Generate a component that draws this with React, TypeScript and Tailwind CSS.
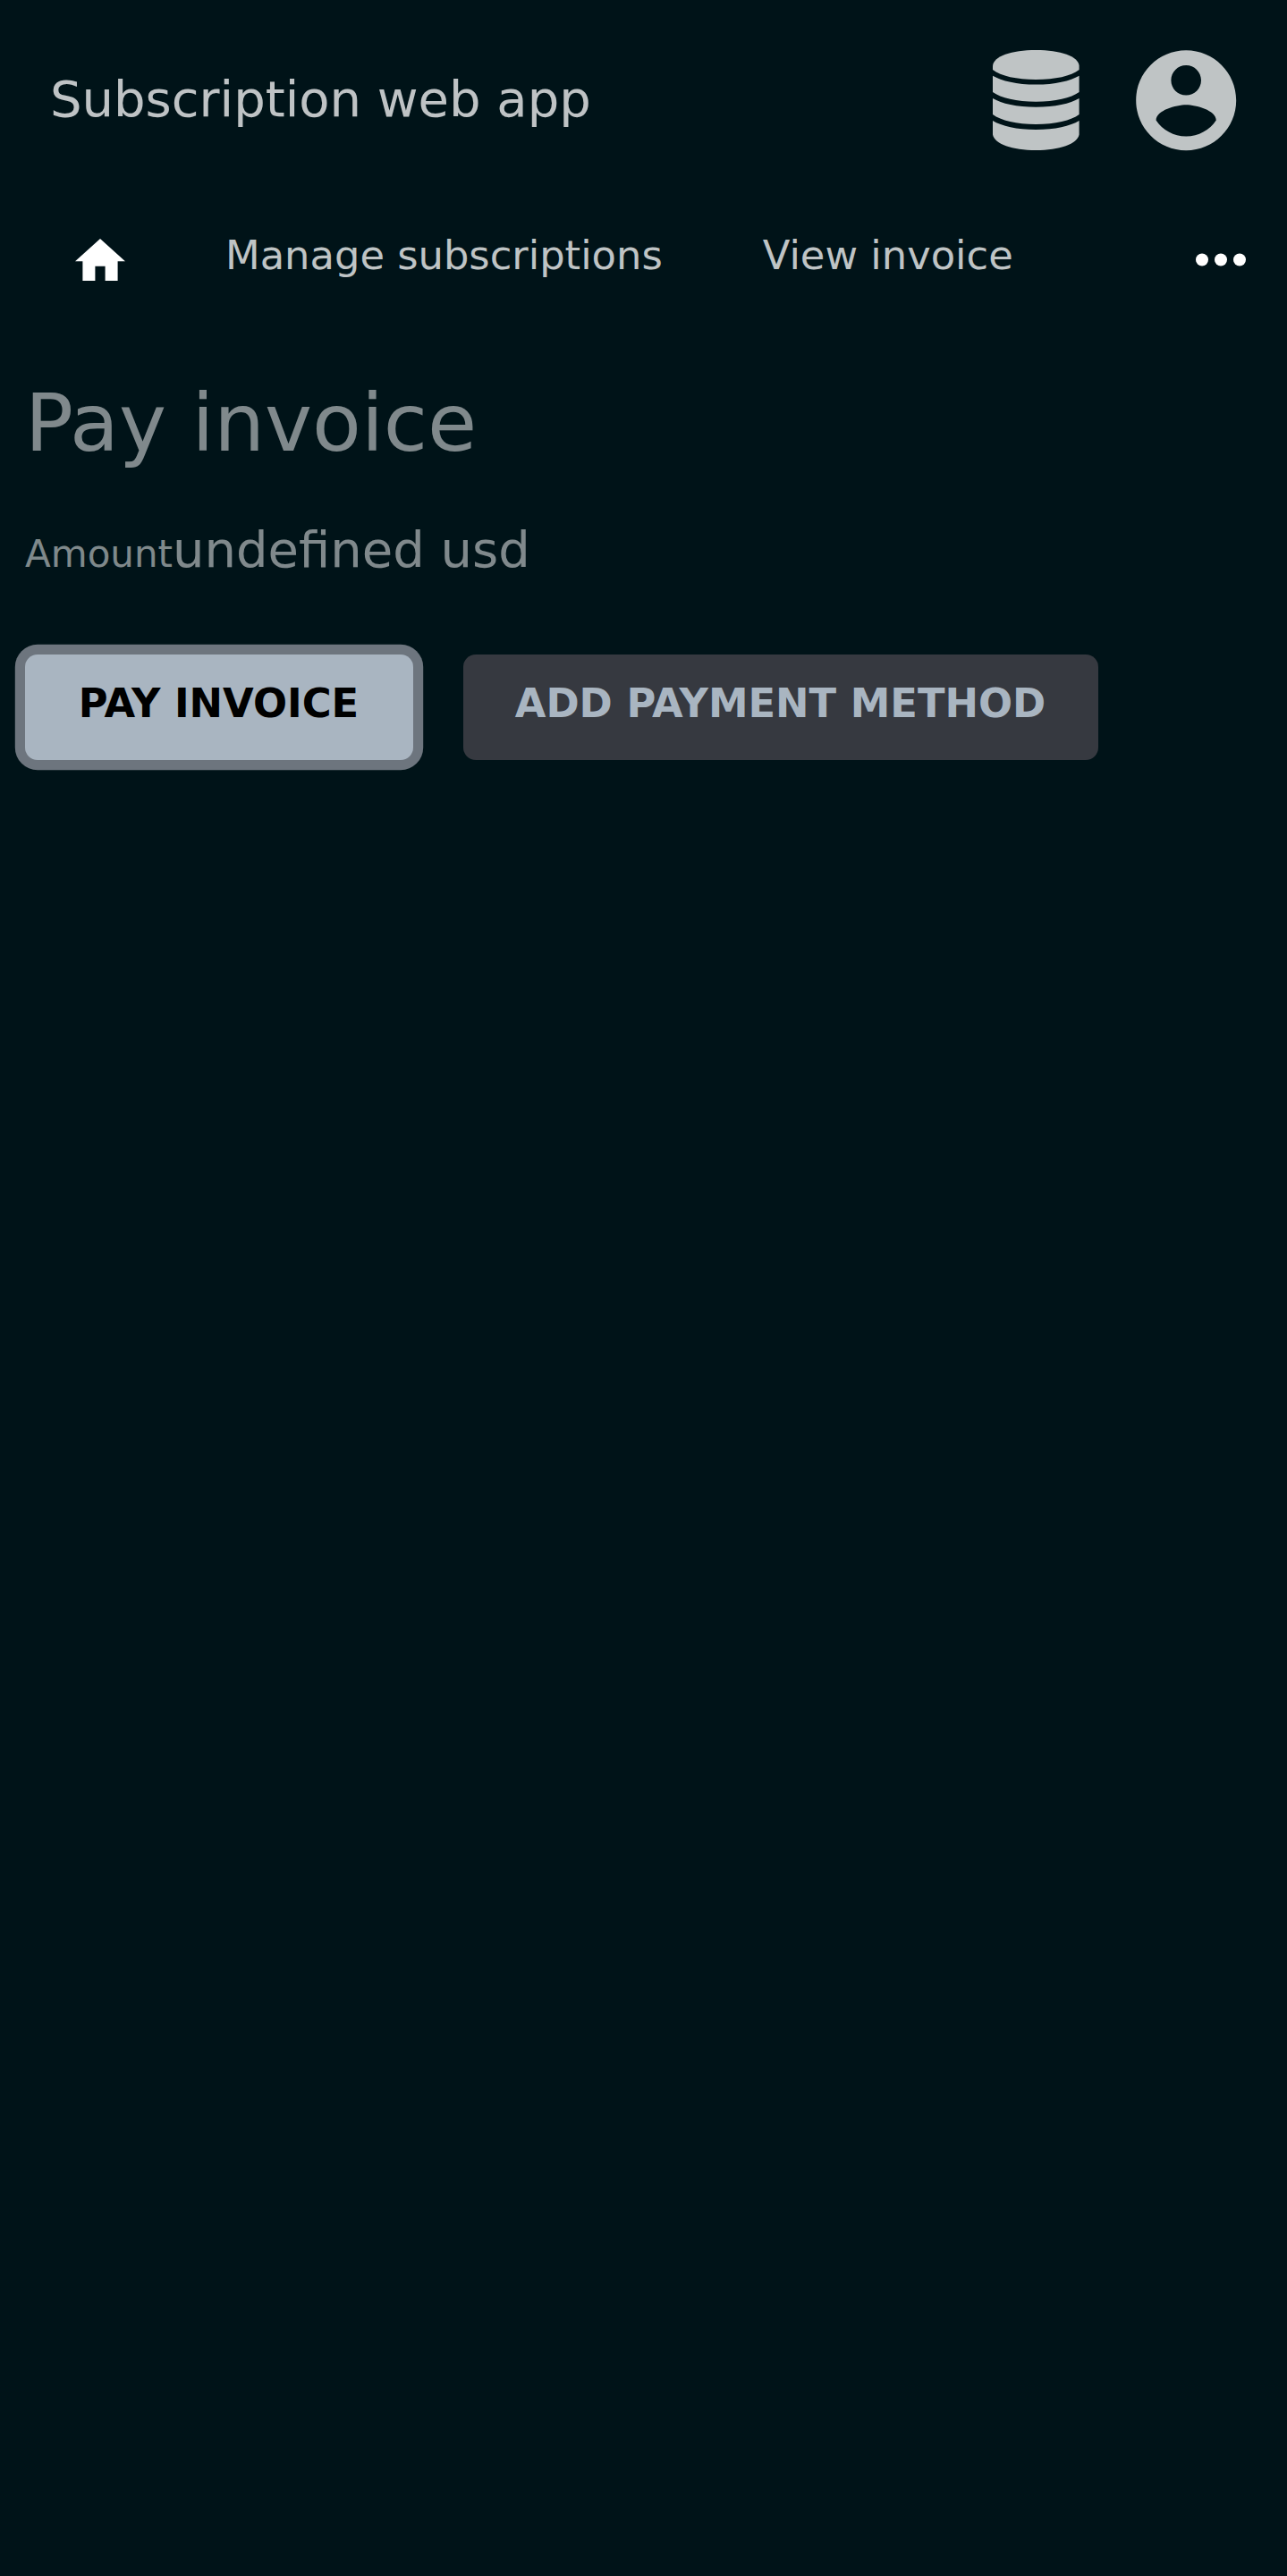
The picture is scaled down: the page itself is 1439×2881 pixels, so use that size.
function Database() {
  return (
    <svg viewBox="0 0 97 112" preserveAspectRatio="none" className="h-28 w-[96.600px]" fill="currentColor">
      <path d="M0 17.500C1 7 21 0 48.500 0S96 7 97 17.500V22C88 29 70 33 48.500 33S9 29 0 22Z" />
      <path d="M0 28.700C10 34.500 27 38.600 48.500 38.600S87 34.500 97 28.700V47C88 53.500 70 57.700 48.500 57.700S9 53.500 0 47Z" />
      <path d="M0 54C10 59.800 27 63.800 48.500 63.800S87 59.800 97 54V72C88 78.700 70 83 48.500 83S9 78.700 0 72Z" />
      <path d="M0 79C10 85 27 89 48.500 89S87 85 97 79V94.500C95 105 75 112 48.500 112S2 105 0 94.500Z" />
    </svg>
  );
}

export default function App() {
  return (
    <div className="min-h-[2881px] w-full bg-[#001318] font-['DejaVu_Sans',sans-serif] text-white/75">
      <header className="flex h-56 items-center justify-between pr-[45.200px] pl-14">
        <h1 className="pb-[3px] text-[56px] leading-[84px] whitespace-nowrap">Subscription web app</h1>
        <div className="flex items-center gap-[52.400px] text-[#bfc4c5]">
          <Database />
          <svg viewBox="0 0 24 24" className="size-[134.400px]" fill="currentColor">
            <path d="M12 2C6.480 2 2 6.480 2 12s4.480 10 10 10 10-4.480 10-10S17.520 2 12 2zm0 3c1.660 0 3 1.340 3 3s-1.340 3-3 3-3-1.340-3-3 1.340-3 3-3zm0 14.200c-2.500 0-4.710-1.280-6-3.220.030-1.990 4-3.080 6-3.080 1.990 0 5.970 1.090 6 3.080-1.290 1.940-3.500 3.220-6 3.220z" />
          </svg>
        </div>
      </header>
      <nav className="flex h-[140px] items-start pr-[40px] pl-[84px] text-[44.800px] leading-[67px] whitespace-nowrap">
        <svg viewBox="2 3 20 17" className="mt-[42.500px] mr-28 h-[47.600px] w-14 text-white" fill="currentColor">
          <path d="M10 20v-6h4v6h5v-8h3L12 3 2 12h3v8z" />
        </svg>
        <a className="mt-[28px] mr-[112px]">Manage subscriptions</a>
        <a className="mt-[28px]">View invoice</a>
        <svg viewBox="4 10 16 4" className="mt-[59px] mr-[6px] ml-auto h-[15px] w-14 text-white" fill="currentColor">
          <circle cx="6" cy="12" r="2" />
          <circle cx="12" cy="12" r="2" />
          <circle cx="18" cy="12" r="2" />
        </svg>
      </nav>
      <main className="px-7 pt-[55px] text-white/50">
        <h2 className="text-[89.600px] leading-[108px]">Pay invoice</h2>
        <p className="mt-[46px] text-[56px] leading-[84px]">
          <span className="text-[42px] leading-none">Amount</span>undefined usd
        </p>
        <div className="mt-[74.600px] flex gap-14 text-[44.800px] leading-[67px] font-bold whitespace-nowrap">
          <button className="flex h-[118.600px] w-[434px] justify-center rounded-[14px] bg-[#a9b5c1] pt-[21.400px] pr-px text-black ring-[11.200px] ring-[#6d757e]">
            PAY INVOICE
          </button>
          <button className="flex h-[118.600px] w-[710px] justify-center rounded-[14px] bg-[#363940] pt-[21.400px] pr-px text-[#a9b5c1]">
            ADD PAYMENT METHOD
          </button>
        </div>
      </main>
    </div>
  );
}
